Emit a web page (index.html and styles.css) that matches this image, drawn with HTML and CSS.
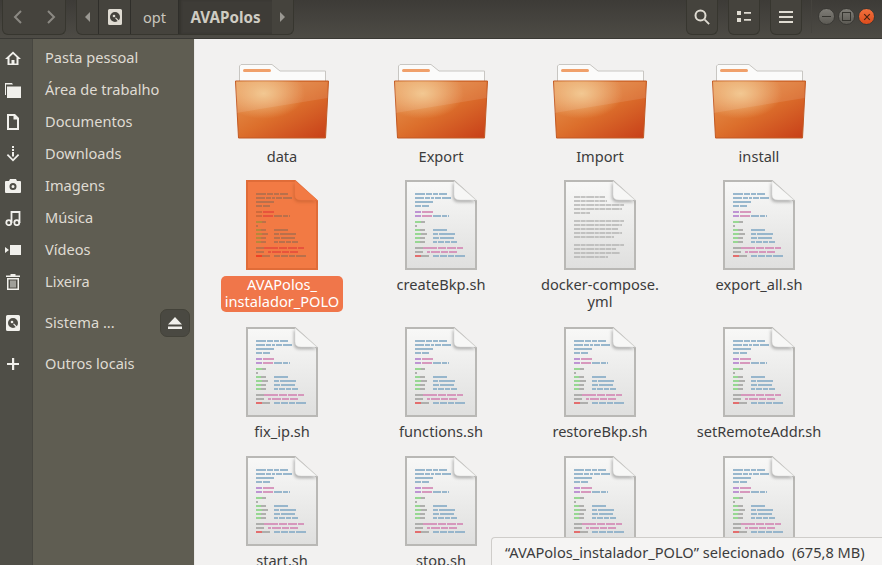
FILE: index.html
```html
<!DOCTYPE html>
<html>
    <head>
        <meta charset="utf-8">
        <title>AVAPolos</title>
        <link rel="stylesheet" href="styles.css">
    </head>
    <body>
        <svg class="defs" width="0" height="0">
            <symbol id="i-home" viewBox="0 0 16 16"><path fill-rule="evenodd" d="M8 1.500 0 9h2.500v6h11V9H16zM8 4l3.500 3.300V13.500h-2V10h-3v3.500h-2V7.300z"/></symbol>
            <symbol id="i-folder" viewBox="0 0 16 16"><path d="M0 1h7l1 1.500H1V13H0zM2 4.500h14V16H2z"/></symbol>
            <symbol id="i-doc" viewBox="0 0 16 16"><path fill-rule="evenodd" d="M2 0h8l4 4v12H2zM4 2v12h8V5.500H8.500V2z"/></symbol>
            <symbol id="i-download" viewBox="0 0 16 16"><path d="M7 0h2v2H7zM7 3h2v2H7zM7 6h2v4.500H7zM3 8l5 5 5-5 1.200 1.200L8 15.500 1.800 9.200z"/></symbol>
            <symbol id="i-camera" viewBox="0 0 16 16"><path fill-rule="evenodd" d="M5 1h6l1 2h3a1 1 0 0 1 1 1v10a1 1 0 0 1-1 1H1a1 1 0 0 1-1-1V4a1 1 0 0 1 1-1h3zM8 5a3.500 3.500 0 1 0 0 7 3.500 3.500 0 0 0 0-7zm0 2a1.500 1.500 0 1 1 0 3 1.500 1.500 0 0 1 0-3z"/></symbol>
            <symbol id="i-music" viewBox="0 0 16 16"><path fill="none" stroke="currentColor" stroke-width="1.800" d="M6.500 13V2h8v11"/><circle cx="3.800" cy="12.700" r="2.500" fill="none" stroke="currentColor" stroke-width="1.800"/><circle cx="11.800" cy="12.700" r="2.500" fill="none" stroke="currentColor" stroke-width="1.800"/></symbol>
            <symbol id="i-video" viewBox="0 0 16 16"><path d="M5 3h11v10H5zM0 5l4 3-4 3z"/></symbol>
            <symbol id="i-trash" viewBox="0 0 16 16"><path fill-rule="evenodd" d="M5.500 0h5v1.500H15V3H1V1.500h4.500zM2 4h12v12H2zM3.500 5.500v9h9v-9z"/><path d="M5.500 6.500h1v7h-1zM7.500 6.500h1v7h-1zM9.500 6.500h1v7h-1z"/></symbol>
            <symbol id="i-disk" viewBox="0 0 14 16"><path fill-rule="evenodd" d="M1.500 0h11A1.500 1.500 0 0 1 14 1.500v13a1.500 1.500 0 0 1-1.500 1.500h-11A1.500 1.500 0 0 1 0 14.500v-13A1.500 1.500 0 0 1 1.500 0zM7 3a5 5 0 1 0 0 10 5 5 0 0 0 0-10z"/><circle cx="6" cy="7" r="1.300"/><path d="M7 9l3.500 4 1-1L8 8.500z"/></symbol>
            <symbol id="i-plus" viewBox="0 0 16 16"><path d="M7 2h2.200v5H14v2H9.200v5H7V9H2V7h5z"/></symbol>
            <symbol id="i-eject" viewBox="0 0 16 16"><path d="M8 2 15 9.500H1zM1 11.500h14V14H1z"/></symbol>
            <symbol id="i-search" viewBox="0 0 16 16"><circle cx="6.500" cy="6.500" r="5" fill="none" stroke="currentColor" stroke-width="2"/><path d="M10 11.300 11.300 10l4.500 4.500-1.300 1.300z"/></symbol>
            <symbol id="i-list" viewBox="0 0 16 16"><path d="M1 2h4v4H1zM1 9h4v4H1zM8 3h7v1.800H8zM8 10h7v1.800H8z"/></symbol>
            <symbol id="i-menu" viewBox="0 0 16 16"><path d="M1 2h14v2H1zM1 7h14v2H1zM1 12h14v2H1z"/></symbol>

            <linearGradient id="front" x1="0" y1="0" x2="0.9" y2="1">
                <stop offset="0" stop-color="#e89a55"/>
                <stop offset="0.55" stop-color="#dc6f2c"/>
                <stop offset="1" stop-color="#c9431a"/>
            </linearGradient>
            <radialGradient id="glow" cx="0.3" cy="0.22" r="0.45">
                <stop offset="0" stop-color="#f3c98e" stop-opacity="0.9"/>
                <stop offset="1" stop-color="#f3c98e" stop-opacity="0"/>
            </radialGradient>
            <linearGradient id="paper" x1="0" y1="0" x2="0" y2="1">
                <stop offset="0" stop-color="#f8f8f7"/>
                <stop offset="1" stop-color="#dfdfde"/>
            </linearGradient>

            <symbol id="folder" viewBox="0 0 94 76">
                <path d="M6 1.500H37L45 8H90.500V30H4.500V3z" fill="#fbfbfa" stroke="#c8c6c2"/>
                <rect x="8" y="6" width="28" height="3" rx="1.500" fill="#f0a06a"/>
                <path d="M.5 18H93.500L90.500 75H3.500z" fill="url(#front)" stroke="#c25a24"/>
                <path d="M1 18H93L91 74.500H4z" fill="url(#glow)"/>
                <path d="M1.500 50 92.500 35V19H1z" fill="#fff" opacity="0.1"/>
            </symbol>

            <symbol id="script" viewBox="0 0 72 90">
                <path class="sheet" d="M1 1H49L71 21V89H1z"/>
                <g class="code" fill="none" stroke-width="2">
                    <path class="c-blue" d="M10 14H42" stroke-dasharray="10 1 6 1 5 1 8"/>
                    <path class="c-blue" d="M10 18H46" stroke-dasharray="9 1 5 1 3 1 6 1 9"/>
                    <path class="c-blue" d="M10 22H28"/>
                    <path class="c-blue" d="M10 26H24" stroke-dasharray="6 1 7"/>
                    <path class="c-purple" d="M10 32H16"/>
                    <path class="c-pink" d="M17 32H28"/>
                    <path class="c-purple" d="M10 36H16"/>
                    <path class="c-pink" d="M17 36H27"/>
                    <path class="c-blue" d="M28 36H44" stroke-dasharray="8 1 5 1 1"/>
                    <path class="c-green" d="M10 42H16"/>
                    <path class="c-grey" d="M16 42H20"/>
                    <path class="c-grey" d="M10 46H12"/>
                    <path class="c-green" d="M10 50H15"/>
                    <path class="c-grey" d="M15 50H20"/>
                    <path class="c-blue" d="M28 50H42"/>
                    <path class="c-green" d="M10 54H16"/>
                    <path class="c-grey" d="M16 54H22"/>
                    <path class="c-blue" d="M28 54H50" stroke-dasharray="5 1 16"/>
                    <path class="c-green" d="M10 58H15"/>
                    <path class="c-grey" d="M15 58H20"/>
                    <path class="c-blue" d="M28 58H49" stroke-dasharray="6 1 14"/>
                    <path class="c-green" d="M10 62H15"/>
                    <path class="c-grey" d="M15 62H20"/>
                    <path class="c-blue" d="M28 62H52" stroke-dasharray="4 1 6 1 5 1 6"/>
                    <path class="c-grey" d="M10 68H18"/>
                    <path class="c-pink" d="M18 68H58" stroke-dasharray="14 1 8 1 9 1 6"/>
                    <path class="c-grey" d="M10 72H18"/>
                    <path class="c-pink" d="M22 72H52" stroke-dasharray="3 1 9 1 7 1 8"/>
                    <path class="c-red" d="M10 76H16"/>
                    <path class="c-grey" d="M16 76H24"/>
                    <path class="c-blue" d="M28 76H60" stroke-dasharray="6 1 7 1 6 1 10"/>
                </g>
                <path class="fold" d="M49 1V15Q49 20 55 20H71z"/>
            </symbol>

            <symbol id="textdoc" viewBox="0 0 72 90">
                <path class="sheet" d="M1 1H49L71 21V89H1z"/>
                <g class="c-text" fill="none" stroke-width="1.500" stroke-dasharray="6 .6 5 .6 8 .6 4 .6">
                    <path d="M10 17H41M10 21H43M10 25H60M10 29H58M10 33H26"/>
                    <path d="M10 41H60M10 45H58M10 49H54M10 53H58M10 57H50"/>
                    <path d="M10 65H60M10 69H52M10 73H56M10 77H44"/>
                </g>
                <path class="fold" d="M49 1V15Q49 20 55 20H71z"/>
            </symbol>
        </svg>

        <div class="window">
            <header class="toolbar">
                <div class="btn-group nav-group">
                    <span class="nav-btn"><svg viewBox="0 0 16 16" class="chevron"><path d="M10 2 4 8l6 6"/></svg></span>
                    <span class="nav-btn"><svg viewBox="0 0 16 16" class="chevron"><path d="M6 2l6 6-6 6"/></svg></span>
                </div>

                <div class="btn-group path-bar">
                    <span class="path-arrow"><i class="tri tri-left"></i></span>
                    <span class="crumb crumb-disk"><svg class="ico-disk"><use href="#i-disk"/></svg></span>
                    <span class="crumb crumb-opt">opt</span>
                    <span class="crumb crumb-current">AVAPolos</span>
                    <span class="path-arrow"><i class="tri tri-right"></i></span>
                </div>

                <div class="tool-buttons">
                    <span class="tool-btn"><svg class="ico"><use href="#i-search"/></svg></span>
                    <span class="tool-btn"><svg class="ico"><use href="#i-list"/></svg></span>
                    <span class="tool-btn"><svg class="ico"><use href="#i-menu"/></svg></span>
                </div>

                <div class="win-buttons">
                    <span class="win-btn"><i class="win-min"></i></span>
                    <span class="win-btn"><i class="win-max"></i></span>
                    <span class="win-btn win-close">
                        <svg viewBox="0 0 10 10"><path d="M1.500 1.500 8.500 8.500M8.500 1.500 1.500 8.500"/></svg>
                    </span>
                </div>
            </header>

            <div class="content">
                <nav class="sidebar">
                    <ul class="places">
                        <li class="place"><span class="place-icon"><svg class="ico"><use href="#i-home"/></svg></span>Pasta pessoal</li>
                        <li class="place"><span class="place-icon"><svg class="ico"><use href="#i-folder"/></svg></span>Área de trabalho</li>
                        <li class="place"><span class="place-icon"><svg class="ico"><use href="#i-doc"/></svg></span>Documentos</li>
                        <li class="place"><span class="place-icon"><svg class="ico"><use href="#i-download"/></svg></span>Downloads</li>
                        <li class="place"><span class="place-icon"><svg class="ico"><use href="#i-camera"/></svg></span>Imagens</li>
                        <li class="place"><span class="place-icon"><svg class="ico"><use href="#i-music"/></svg></span>Música</li>
                        <li class="place"><span class="place-icon"><svg class="ico"><use href="#i-video"/></svg></span>Vídeos</li>
                        <li class="place"><span class="place-icon"><svg class="ico"><use href="#i-trash"/></svg></span>Lixeira</li>
                    </ul>
                    <ul class="places">
                        <li class="place">
                            <span class="place-icon"><svg class="ico-disk side-disk"><use href="#i-disk"/></svg></span>Sistema ...
                            <span class="eject"><svg class="ico"><use href="#i-eject"/></svg></span>
                        </li>
                    </ul>
                    <ul class="places">
                        <li class="place"><span class="place-icon"><svg class="ico"><use href="#i-plus"/></svg></span>Outros locais</li>
                    </ul>
                </nav>

                <main class="files">
                    <div class="file is-folder"><span class="thumb"><svg class="folder-icon"><use href="#folder"/></svg></span><span class="name">data</span></div>
                    <div class="file is-folder"><span class="thumb"><svg class="folder-icon"><use href="#folder"/></svg></span><span class="name">Export</span></div>
                    <div class="file is-folder"><span class="thumb"><svg class="folder-icon"><use href="#folder"/></svg></span><span class="name">Import</span></div>
                    <div class="file is-folder"><span class="thumb"><svg class="folder-icon"><use href="#folder"/></svg></span><span class="name">install</span></div>

                    <div class="file selected"><span class="thumb"><svg class="doc-icon"><use href="#script"/></svg></span><span class="name">AVAPolos_<br>instalador_POLO</span></div>
                    <div class="file"><span class="thumb"><svg class="doc-icon"><use href="#script"/></svg></span><span class="name">createBkp.sh</span></div>
                    <div class="file"><span class="thumb"><svg class="doc-icon"><use href="#textdoc"/></svg></span><span class="name">docker-compose.<br>yml</span></div>
                    <div class="file"><span class="thumb"><svg class="doc-icon"><use href="#script"/></svg></span><span class="name">export_all.sh</span></div>

                    <div class="file"><span class="thumb"><svg class="doc-icon"><use href="#script"/></svg></span><span class="name">fix_ip.sh</span></div>
                    <div class="file"><span class="thumb"><svg class="doc-icon"><use href="#script"/></svg></span><span class="name">functions.sh</span></div>
                    <div class="file"><span class="thumb"><svg class="doc-icon"><use href="#script"/></svg></span><span class="name">restoreBkp.sh</span></div>
                    <div class="file"><span class="thumb"><svg class="doc-icon"><use href="#script"/></svg></span><span class="name">setRemoteAddr.sh</span></div>

                    <div class="file"><span class="thumb"><svg class="doc-icon"><use href="#script"/></svg></span><span class="name">start.sh</span></div>
                    <div class="file"><span class="thumb"><svg class="doc-icon"><use href="#script"/></svg></span><span class="name">stop.sh</span></div>
                    <div class="file"><span class="thumb"><svg class="doc-icon"><use href="#script"/></svg></span><span class="name"></span></div>
                    <div class="file"><span class="thumb"><svg class="doc-icon"><use href="#script"/></svg></span><span class="name"></span></div>
                </main>
            </div>

            <div class="status">“AVAPolos_instalador_POLO” selecionado  (675,8 MB)</div>
        </div>
    </body>
</html>
```

FILE: styles.css
```css
html, body {
    margin: 0;
    padding: 0;
}

body {
    font-family: "Noto Sans", "Open Sans", sans-serif;
    font-size: 14.6px;
}

.defs {
    position: absolute;
}

ul {
    list-style: none;
    margin: 0;
    padding: 0;
}

.window {
    position: relative;
    width: 882px;
    height: 565px;
    overflow: hidden;
    display: flex;
    flex-direction: column;
    background: #f2f1f0;
}

.ico {
    display: block;
    width: 16px;
    height: 16px;
    fill: currentColor;
}

/* toolbar */
.toolbar {
    height: 39px;
    box-sizing: border-box;
    flex: none;
    display: flex;
    align-items: flex-start;
    padding-left: 2px;
    background: linear-gradient(to bottom, #3d3b37, #4d4b45);
    border-bottom: 1px solid #3a3935;
    color: #dfdbd2;
}

.btn-group {
    display: flex;
    height: 35px;
    box-sizing: border-box;
    background: #45433d;
    border: 1px solid #37362f;
    border-top: none;
    border-radius: 0 0 6px 6px;
}

.nav-group {
    width: 64px;
}

.nav-btn {
    flex: 1;
    display: flex;
    align-items: center;
    justify-content: center;
}

.chevron {
    width: 16px;
    height: 16px;
    fill: none;
    stroke: #8b8983;
    stroke-width: 2;
}

.path-bar {
    width: 218px;
    margin-left: 10px;
}

.path-arrow {
    width: 21px;
    display: flex;
    align-items: center;
    justify-content: center;
}

.tri {
    display: block;
    width: 0;
    height: 0;
    border-top: 5px solid transparent;
    border-bottom: 5px solid transparent;
}

.tri-left {
    border-right: 5px solid #9a9892;
}

.tri-right {
    border-left: 5px solid #9a9892;
}

.crumb {
    display: flex;
    align-items: center;
    justify-content: center;
    border-left: 1px solid #2f2e2a;
}

.crumb-disk {
    width: 31px;
}

.ico-disk {
    display: block;
    width: 14px;
    height: 16px;
    fill: #dfdbd2;
}

.crumb-opt {
    width: 47px;
    color: #c9c6bd;
}

.crumb-current {
    width: 93px;
    font-size: 15.2px;
    font-weight: 700;
    color: #cfccc3;
    background: #3e3c37;
    border-left: 1px solid #2f2e2a;
    box-shadow: inset 2px 0 2px #35342f;
}

.tool-buttons {
    display: flex;
    gap: 10px;
    margin-left: 392px;
}

.tool-btn {
    width: 32px;
    height: 35px;
    box-sizing: border-box;
    display: flex;
    align-items: center;
    justify-content: center;
    background: #45433d;
    border: 1px solid #37362f;
    border-top: none;
    border-radius: 0 0 6px 6px;
    color: #dfdbd2;
}

.win-buttons {
    display: flex;
    gap: 3px;
    height: 33px;
    align-items: center;
    margin-left: 9px;
    padding-left: 6px;
    border-left: 1px solid #45433e;
}

.win-btn {
    width: 17px;
    height: 17px;
    box-sizing: border-box;
    border-radius: 50%;
    border: 1px solid #3a3935;
    background: linear-gradient(to bottom, #7f7d77, #5c5a54);
    display: flex;
    align-items: center;
    justify-content: center;
}

.win-min {
    display: block;
    width: 9px;
    height: 1px;
    background: #35342f;
}

.win-max {
    display: block;
    width: 7px;
    height: 7px;
    border: 1px solid #35342f;
}

.win-close {
    background: linear-gradient(to bottom, #f2703c, #dd4c1c);
}

.win-close svg {
    width: 8px;
    height: 8px;
    fill: none;
    stroke: #4a2412;
    stroke-width: 1.500;
}

/* sidebar */
.content {
    flex: 1;
    display: flex;
    min-height: 0;
}

.sidebar {
    flex: none;
    width: 195px;
    box-sizing: border-box;
    padding-top: 3px;
    display: flex;
    flex-direction: column;
    gap: 9px;
    background: linear-gradient(to right, #4f4e47 32px, #474640 32px, #474640 33px, #5f5d52 33px, #5f5d52 194px, #e9e8e6 194px);
    color: #dfdbd2;
}

.place {
    height: 32px;
    box-sizing: border-box;
    padding-bottom: 2px;
    display: flex;
    align-items: center;
}

.place-icon {
    width: 45px;
    margin-top: 2px;
    padding-left: 5px;
    box-sizing: border-box;
    color: #f1f0ec;
}

.side-disk {
    margin-left: 1px;
    fill: #f1f0ec;
}

.eject {
    margin-left: auto;
    margin-right: 5px;
    margin-top: 2px;
    width: 30px;
    height: 28px;
    box-sizing: border-box;
    display: flex;
    align-items: center;
    justify-content: center;
    background: #4a4942;
    border: 1px solid #434239;
    border-radius: 7px;
    color: #f1f0ec;
}

/* file grid */
.files {
    flex: 1;
    display: grid;
    grid-template-columns: repeat(4, 159px);
    grid-template-rows: 123px 147px 129px 123px;
    align-content: start;
    padding: 15px 0 0 7.5px;
    overflow: hidden;
}

.file {
    display: flex;
    flex-direction: column;
    align-items: center;
}

.thumb {
    height: 96px;
    display: flex;
    align-items: center;
    justify-content: center;
}

.is-folder .thumb {
    height: 94px;
}

.is-folder .name {
    margin-top: 0;
}

.folder-icon {
    width: 94px;
    height: 76px;
}

.doc-icon {
    width: 72px;
    height: 90px;
}

.name {
    margin-top: 3px;
    padding: 0 4px 2px;
    border-radius: 5px;
    line-height: 17px;
    text-align: center;
    color: #3c3c3c;
}

/* the icon symbols take their colours from these variables, they pass through <use> */
.sheet {
    fill: var(--sheet, url(#paper));
    stroke: var(--edge, #b9b8b5);
    stroke-width: 2;
}

.fold {
    fill: var(--fold, #f7f7f6);
    stroke: var(--fold-edge, #d6d6d4);
    stroke-width: 0.500;
    filter: drop-shadow(-1px 2px 1.500px var(--fold-shadow, rgba(0, 0, 0, 0.28)));
}

.code {
    opacity: 0.9;
}

.c-blue { stroke: var(--blue, #8fb1c9); }
.c-purple { stroke: var(--purple, #b98bd1); }
.c-pink { stroke: var(--pink, #d58fb8); }
.c-green { stroke: var(--green, #8fd68a); }
.c-grey { stroke: var(--grey, #a9a9a7); }
.c-red { stroke: var(--red, #e46262); }
.c-text { stroke: #b4b4b2; }

/* selected file: same icon, orange colours */
.selected .name {
    background: #f0764a;
    color: #fff;
}

.selected .doc-icon {
    --sheet: #f27a44;
    --edge: #e06c38;
    --fold: #f27a44;
    --fold-edge: #f27a44;
    --fold-shadow: rgba(120, 50, 10, 0.25);
    --blue: #b3704c;
    --purple: #c96a3c;
    --pink: #e8503c;
    --green: #b08a3a;
    --grey: #b8704a;
    --red: #ee3c22;
}

/* status bubble over the grid */
.status {
    position: absolute;
    right: 0;
    bottom: 0;
    width: 391px;
    height: 28px;
    box-sizing: border-box;
    padding-left: 13px;
    line-height: 29px;
    white-space: pre;
    color: #3c3c3c;
    background: #f5f4f3;
    border: 1px solid #cfcdca;
    border-right: none;
    border-bottom: none;
    border-radius: 4px 0 0 0;
}
```
